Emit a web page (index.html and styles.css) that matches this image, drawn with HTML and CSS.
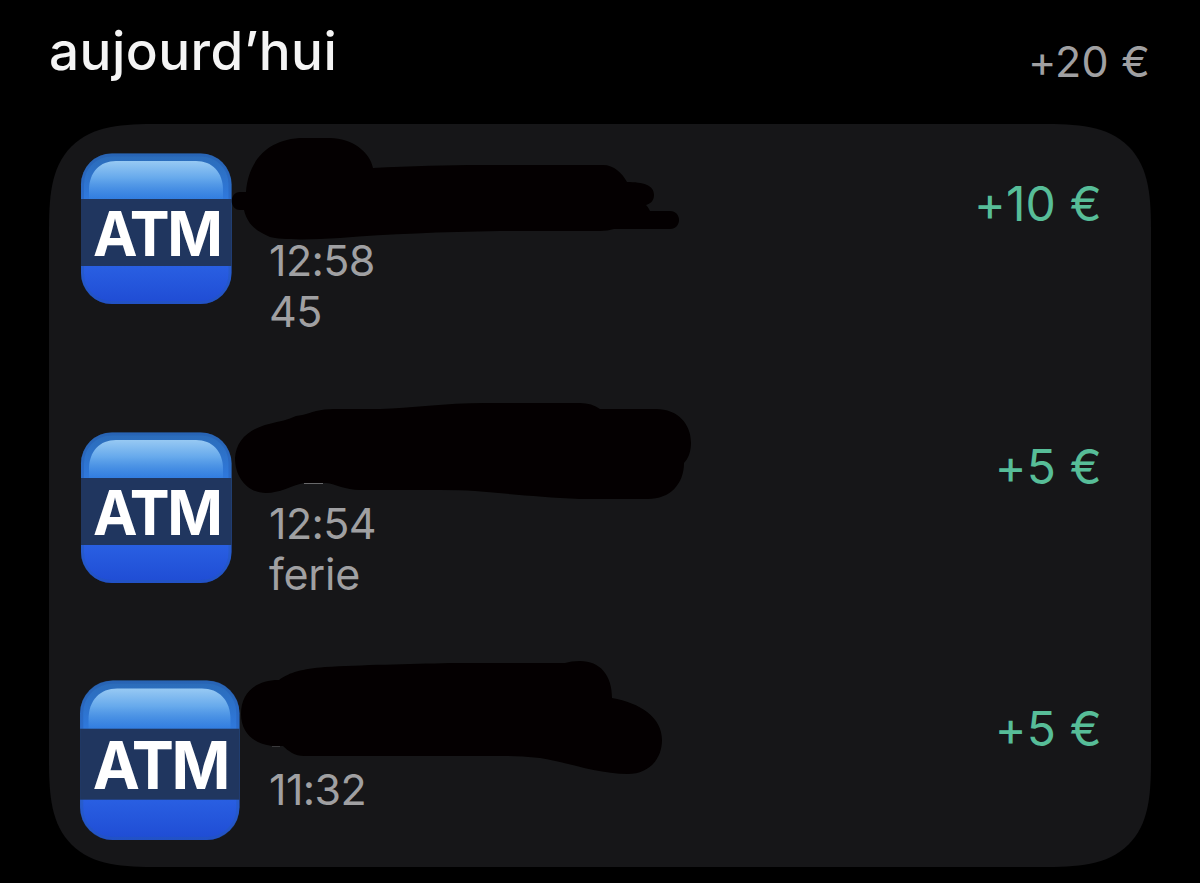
FILE: index.html
```
<!DOCTYPE html>
<html lang="fr">
<head>
  <meta charset="UTF-8">
  <meta name="viewport" content="width=device-width, initial-scale=1">
  <title>aujourd’hui</title>
  <link rel="stylesheet" href="styles.css">
</head>
<body>
  <!-- gradients and icon shared by the rows -->
  <svg class="defs" width="0" height="0">
    <defs>
      <linearGradient id="base" x1="0" y1="0" x2="0" y2="1">
        <stop offset="0" stop-color="#2b6cb8"/>
        <stop offset="0.3" stop-color="#2f78dc"/>
        <stop offset="0.75" stop-color="#295fe2"/>
        <stop offset="1" stop-color="#1f4cd4"/>
      </linearGradient>
      <linearGradient id="shine" x1="0" y1="0" x2="0" y2="1">
        <stop offset="0" stop-color="#97c9f3"/>
        <stop offset="0.45" stop-color="#66a9ec"/>
        <stop offset="1" stop-color="#3380e2" stop-opacity="0.7"/>
      </linearGradient>
      <symbol id="atm" viewBox="0 0 152 152">
        <rect x="1" y="0.500" width="150.500" height="150.500" rx="31" fill="url(#base)"/>
        <rect x="2.500" y="2" width="147.500" height="147.500" rx="29" fill="none" stroke="#2559ae" stroke-width="3" opacity="0.4"/>
        <path d="M9 46V37C9 19 20 8 36 8H116C132 8 143 19 143 37V46Z" fill="url(#shine)"/>
        <rect x="1" y="46" width="150.500" height="67" fill="#20365f"/>
        <text x="13" y="103" textLength="127.500" lengthAdjust="spacingAndGlyphs" class="atm-text">ATM</text>
      </symbol>
    </defs>
  </svg>

  <header class="day">
    <h1 class="day-title">aujourd’hui</h1>
    <span class="day-total">+20 €</span>
  </header>

  <main class="card">
    <div class="row">
      <svg class="icon"><use href="#atm"/></svg>
      <div class="details">
        <p>12:58</p>
        <p>45</p>
      </div>
      <span class="amount">+10 €</span>
      <svg class="marker" viewBox="220 124 480 263">
        <path d="M240 192H246C248 163 266 138 304 138H330C352 138 370 152 373 168C410 166 450 165 480 165H603C614 165 622 173 627 182C643 182 654 185 654 195C654 201 650 204 646 205C648 207 649 209 650 211H670C682 211 682 229 670 229H614Q608 231 600 231H500C440 232 390 234 340 238C310 240 280 240 270 237C255 231 247 223 244 210H240C229 210 229 192 240 192Z"/>
      </svg>
    </div>
    <div class="row row-second">
      <svg class="icon"><use href="#atm"/></svg>
      <div class="details">
        <p>12:54</p>
        <p class="note">ferie</p>
      </div>
      <span class="amount">+5 €</span>
      <svg class="marker" viewBox="220 387 480 263">
        <path d="M235 458C236 441 248 429 269 424C280 421 288 420 296 416C305 415 312 412 316 411Q324 409 334 409H380C410 408 445 403 485 403H580Q592 403 600 409H656C678 409 691 424 691 443C691 452 688 459 684 463C684 484 670 499 648 499H580C540 497 510 494 475 491Q460 490 440 490H360C345 490 336 484 326 483H304C290 486 280 493 266 493C248 493 235 478 235 458Z"/>
        <path class="edge" d="M304 483.500H323"/>
      </svg>
    </div>
    <div class="row row-last">
      <svg class="icon"><use href="#atm"/></svg>
      <div class="details">
        <p>11:32</p>
      </div>
      <span class="amount">+5 €</span>
      <svg class="marker" viewBox="220 650 480 263">
        <path d="M241 714C241 694 254 680 279 680C290 672 302 669 325 667C360 665 410 664 450 663H565Q571 661 580 661C600 661 612 675 612 698C640 703 662 717 662 740C662 760 648 774 628 774C598 774 570 763 540 758Q520 756 505 756H304C295 756 288 751 283 746H272C253 744 241 732 241 714Z"/>
        <path class="edge edge-soft" d="M272 746.500H280"/>
      </svg>
    </div>
  </main>
</body>
</html>
```

FILE: styles.css
```
* { box-sizing: border-box; }
body { margin: 0; height: 883px; overflow: hidden; background: #000; font-family: Inter, 'Liberation Sans', sans-serif; }
h1, p { margin: 0; font-weight: 400; }
.defs { position: absolute; }

.day { display: flex; justify-content: space-between; height: 124px; padding: 18px 50px 0 49px; }
.day-title { font-size: 53px; font-weight: 500; line-height: 66px; letter-spacing: 0.45px; color: #f4f4f4; }
.day-total { margin-top: 17px; font-size: 43px; line-height: 52px; letter-spacing: 0.2px; color: #a0a0a2; }

.card { width: 1102px; height: 743px; margin-left: 49px; background: #161618; border-radius: 80px; }
@supports (corner-shape: squircle) {
  .card { border-radius: 110px; corner-shape: superellipse(1.6); }
}

.row { position: relative; display: grid; grid-template-columns: 189px 1fr auto; height: 263px; padding: 0 49px 0 31px; }
.icon { width: 152px; height: 152px; margin-top: 29px; }
.details { margin-top: 111px; font-size: 43px; line-height: 51px; letter-spacing: -0.6px; color: #a0a0a2; }
.note { letter-spacing: -0.2px; }
.amount { margin-top: 52px; font-size: 48px; line-height: 56px; letter-spacing: 0.2px; color: #57bd98; }
.atm-text { font-size: 62px; font-weight: 700; letter-spacing: -2.5px; fill: #fff; }

.row-second .icon { margin-top: 45px; }
.row-last { height: 217px; }
.row-last .icon { width: 161px; height: 161px; margin: 30px 0 0 -1px; }
.row-last .details { margin-top: 114px; }
.row-last .amount { margin-top: 51px; }

/* pen strokes drawn over the names */
.marker { position: absolute; left: 171px; top: 0; width: 480px; height: 263px; fill: #040001; }
.edge { fill: none; stroke: #68686a; stroke-width: 1; }
.edge-soft { stroke: #3a3a3c; }
```
